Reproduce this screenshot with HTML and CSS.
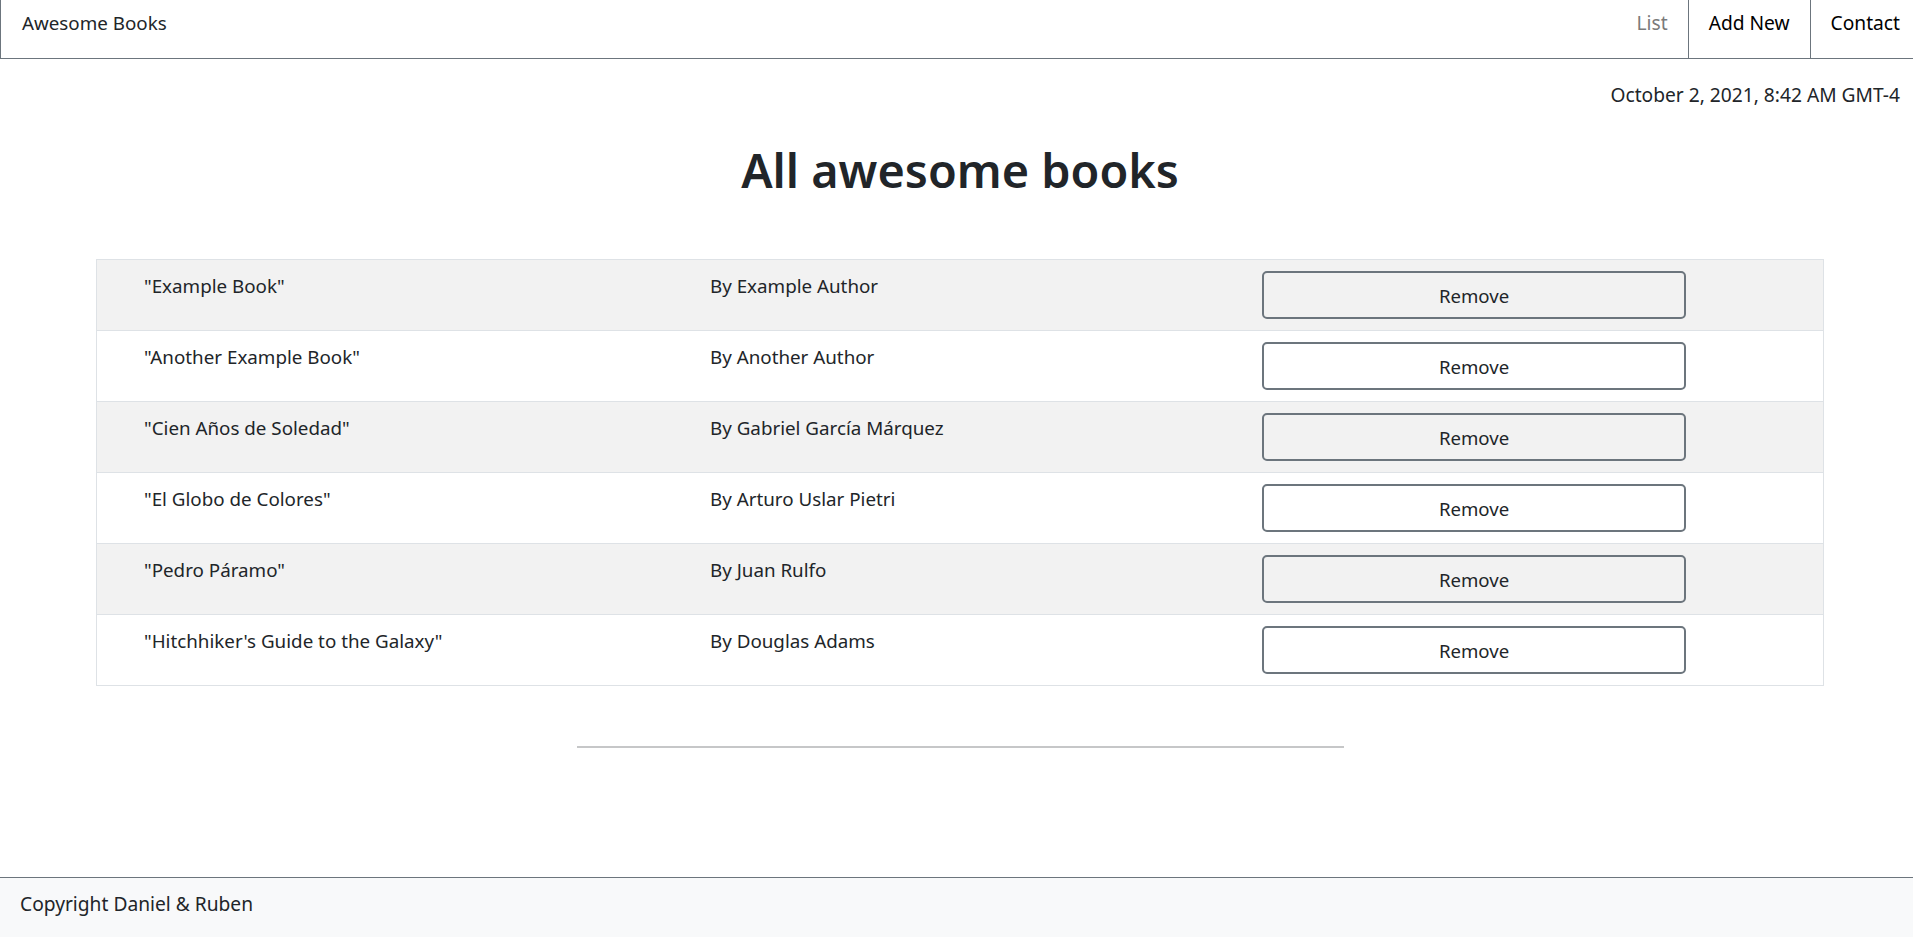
FILE: index.html
```html
<!DOCTYPE html>
<html lang="en">
<head>
<meta charset="utf-8">
<title>Awesome Books</title>
<link rel="stylesheet" href="styles.css">
</head>
<body>
<div class="page">
  <header class="navbar">
    <a class="brand" href="#">Awesome Books</a>
    <nav class="nav">
      <a class="nav-link active" href="#">List</a>
      <a class="nav-link sep" href="#">Add New</a>
      <a class="nav-link sep last" href="#">Contact</a>
    </nav>
  </header>
  <main class="main">
    <p class="date">October 2, 2021, 8:42 AM GMT-4</p>
    <h1 class="title">All awesome books</h1>
    <div class="books">
      <div class="book striped">
        <span class="book-title">"Example Book"</span>
        <span class="book-author">By Example Author</span>
        <button class="btn-remove">Remove</button>
      </div>
      <div class="book">
        <span class="book-title">"Another Example Book"</span>
        <span class="book-author">By Another Author</span>
        <button class="btn-remove">Remove</button>
      </div>
      <div class="book striped">
        <span class="book-title">"Cien Años de Soledad"</span>
        <span class="book-author">By Gabriel García Márquez</span>
        <button class="btn-remove">Remove</button>
      </div>
      <div class="book">
        <span class="book-title">"El Globo de Colores"</span>
        <span class="book-author">By Arturo Uslar Pietri</span>
        <button class="btn-remove">Remove</button>
      </div>
      <div class="book striped">
        <span class="book-title">"Pedro Páramo"</span>
        <span class="book-author">By Juan Rulfo</span>
        <button class="btn-remove">Remove</button>
      </div>
      <div class="book">
        <span class="book-title">"Hitchhiker's Guide to the Galaxy"</span>
        <span class="book-author">By Douglas Adams</span>
        <button class="btn-remove">Remove</button>
      </div>
    </div>
    <hr class="divider">
  </main>
  <footer class="footer">Copyright Daniel &amp; Ruben</footer>
</div>
</body>
</html>
```

FILE: styles.css
```css
html, body {
  margin: 0;
  padding: 0;
  overflow: hidden;
}

body {
  font-family: "Noto Sans", "Open Sans", sans-serif;
  font-size: 19.2px;
  line-height: 30px;
  color: #212529;
  background: #fff;
}

.page {
  width: 1920px;
  height: 937px;
  display: flex;
  flex-direction: column;
}

.navbar {
  height: 58px;
  display: flex;
  justify-content: space-between;
  align-items: stretch;
  border-left: 1px solid #6c757d;
  border-bottom: 1px solid #6c757d;
}

.brand {
  padding: 8px 0 0 21px;
  font-size: 18.8px;
  color: #212529;
  text-decoration: none;
}

.nav {
  display: flex;
  align-items: stretch;
}

.nav-link {
  padding: 8px 20px 0;
  color: #000;
  text-decoration: none;
}

.nav-link.active {
  color: #7a7a7a;
}

.nav-link.sep {
  border-left: 1px solid #6c757d;
}

.nav-link.last {
  padding-right: 20px;
}

.main {
  flex: 1;
  display: flex;
  flex-direction: column;
}

.date {
  margin: 21px 20px 0 0;
  text-align: right;
}

.title {
  margin: 30px 0 0;
  text-align: center;
  font-size: 46.8px;
  line-height: 60px;
  font-weight: 600;
}

.books {
  margin: 59px 96px 0;
  border: 1px solid #dee2e6;
  border-top: none;
  font-size: 18.8px;
}

.book {
  display: grid;
  grid-template-columns: 566px 552px 424px;
  align-items: start;
  padding: 11px 0 11px 47px;
  border-top: 1px solid #dee2e6;
}

.book.striped {
  background: #f2f2f2;
}

.btn-remove {
  height: 48px;
  font-family: inherit;
  font-size: 18.6px;
  color: #212529;
  background: transparent;
  border: 2px solid #6c757d;
  border-radius: 5px;
}

.divider {
  width: 767px;
  margin: 60px auto 0;
  border: 0;
  border-top: 2px solid #c6c7c8;
}

.footer {
  height: 48px;
  padding: 11px 0 0 20px;
  background: #f8f9fa;
  border-top: 1px solid #6c757d;
}
```
